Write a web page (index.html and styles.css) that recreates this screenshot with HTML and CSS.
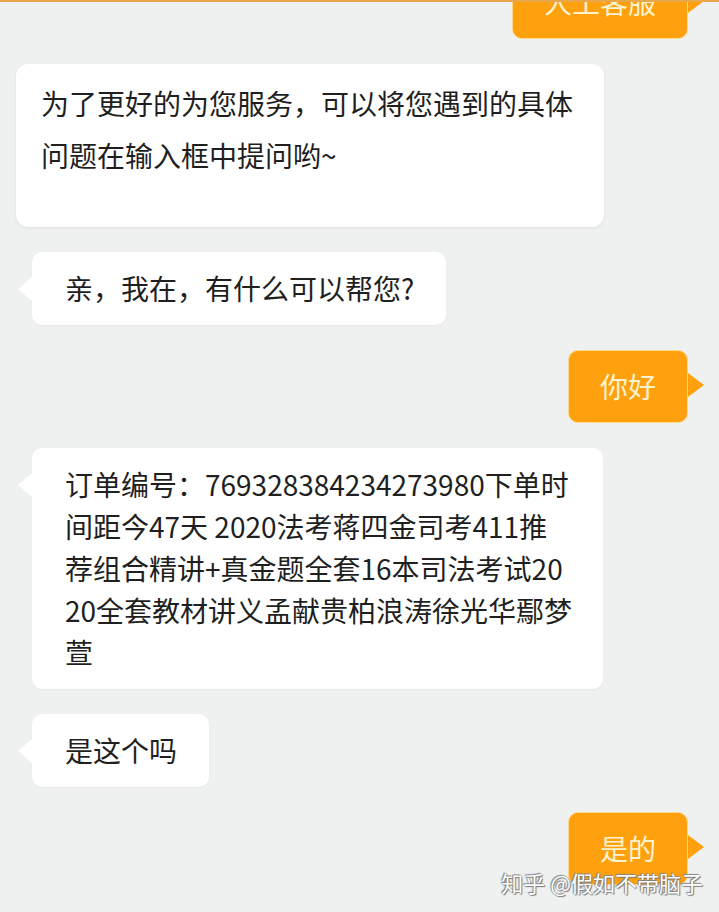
FILE: index.html
```html
<!DOCTYPE html>
<html lang="zh-CN">
<head>
<meta charset="utf-8">
<title>客服对话</title>
<link rel="stylesheet" href="styles.css">
</head>
<body>
<div class="screen">
  <div class="topline"></div>
  <div class="chat">
    <div class="row right first">
      <div class="bubble mine">人工客服</div>
    </div>
    <div class="row left">
      <div class="card">为了更好的为您服务，可以将您遇到的具体<br>问题在输入框中提问哟~</div>
    </div>
    <div class="row left">
      <div class="bubble theirs">亲，我在，有什么可以帮您?</div>
    </div>
    <div class="row right">
      <div class="bubble mine">你好</div>
    </div>
    <div class="row left">
      <div class="bubble theirs wide">订单编号：769328384234273980下单时<br>间距今47天 2020法考蒋四金司考411推<br>荐组合精讲+真金题全套16本司法考试20<br>20全套教材讲义孟献贵柏浪涛徐光华鄢梦<br>萱</div>
    </div>
    <div class="row left">
      <div class="bubble theirs">是这个吗</div>
    </div>
    <div class="row right">
      <div class="bubble mine">是的</div>
    </div>
  </div>
  <div class="watermark">知乎 @假如不带脑子</div>
</div>
</body>
</html>
```
FILE: styles.css
```css
html, body {
  margin: 0;
  padding: 0;
}
body {
  background: #eef1f0;
  font-family: "Noto Sans CJK SC", "Noto Sans", sans-serif;
}
.screen {
  position: relative;
  width: 719px;
  height: 912px;
  overflow: hidden;
  background: #eef1f0;
}
.topline {
  position: absolute;
  left: 0;
  top: 0;
  width: 100%;
  height: 2px;
  background: #e9a74c;
  z-index: 2;
}
.chat {
  display: flex;
  flex-direction: column;
  gap: 25px;
}
.row {
  display: flex;
}
.row.left {
  justify-content: flex-start;
}
.row.right {
  justify-content: flex-end;
  padding-right: 31px;
}
.row.first {
  margin-top: -34px;
}
.bubble {
  position: relative;
  font-size: 28px;
  line-height: 42px;
  padding: 15px 32px 16px 32px;
  border-radius: 10px;
  white-space: nowrap;
}
.theirs {
  margin-left: 32px;
  background: #ffffff;
  color: #1f1f1f;
  padding-left: 33px;
  box-shadow: 0 1px 2px rgba(0, 0, 0, 0.04);
}
.theirs::before {
  content: "";
  position: absolute;
  left: -14px;
  top: 25px;
  border-top: 12px solid transparent;
  border-bottom: 12px solid transparent;
  border-right: 14px solid #ffffff;
}
.wide {
  width: 506px;
}
.mine {
  background: #ffa10e;
  color: #fff3cf;
  border: 1px solid #ffd98a;
  padding: 14px 31px 15px 31px;
}
.mine::after {
  content: "";
  position: absolute;
  right: -17px;
  top: 22px;
  border-top: 12px solid transparent;
  border-bottom: 12px solid transparent;
  border-left: 16px solid #ffa10e;
}
.card {
  margin-left: 16px;
  width: 538px;
  background: #ffffff;
  color: #1f1f1f;
  font-size: 28px;
  line-height: 52px;
  padding: 13px 25px 46px 25px;
  border-radius: 12px;
  box-shadow: 0 1px 3px rgba(0, 0, 0, 0.08);
  white-space: nowrap;
}
.watermark {
  position: absolute;
  right: 16px;
  top: 867px;
  font-size: 22px;
  line-height: 30px;
  color: #ffffff;
  text-shadow: 0 0 1px #6a6a6a, 1px 1px 1px #7a7a7a, -1px -1px 1px #8a8a8a;
  z-index: 3;
}
```
